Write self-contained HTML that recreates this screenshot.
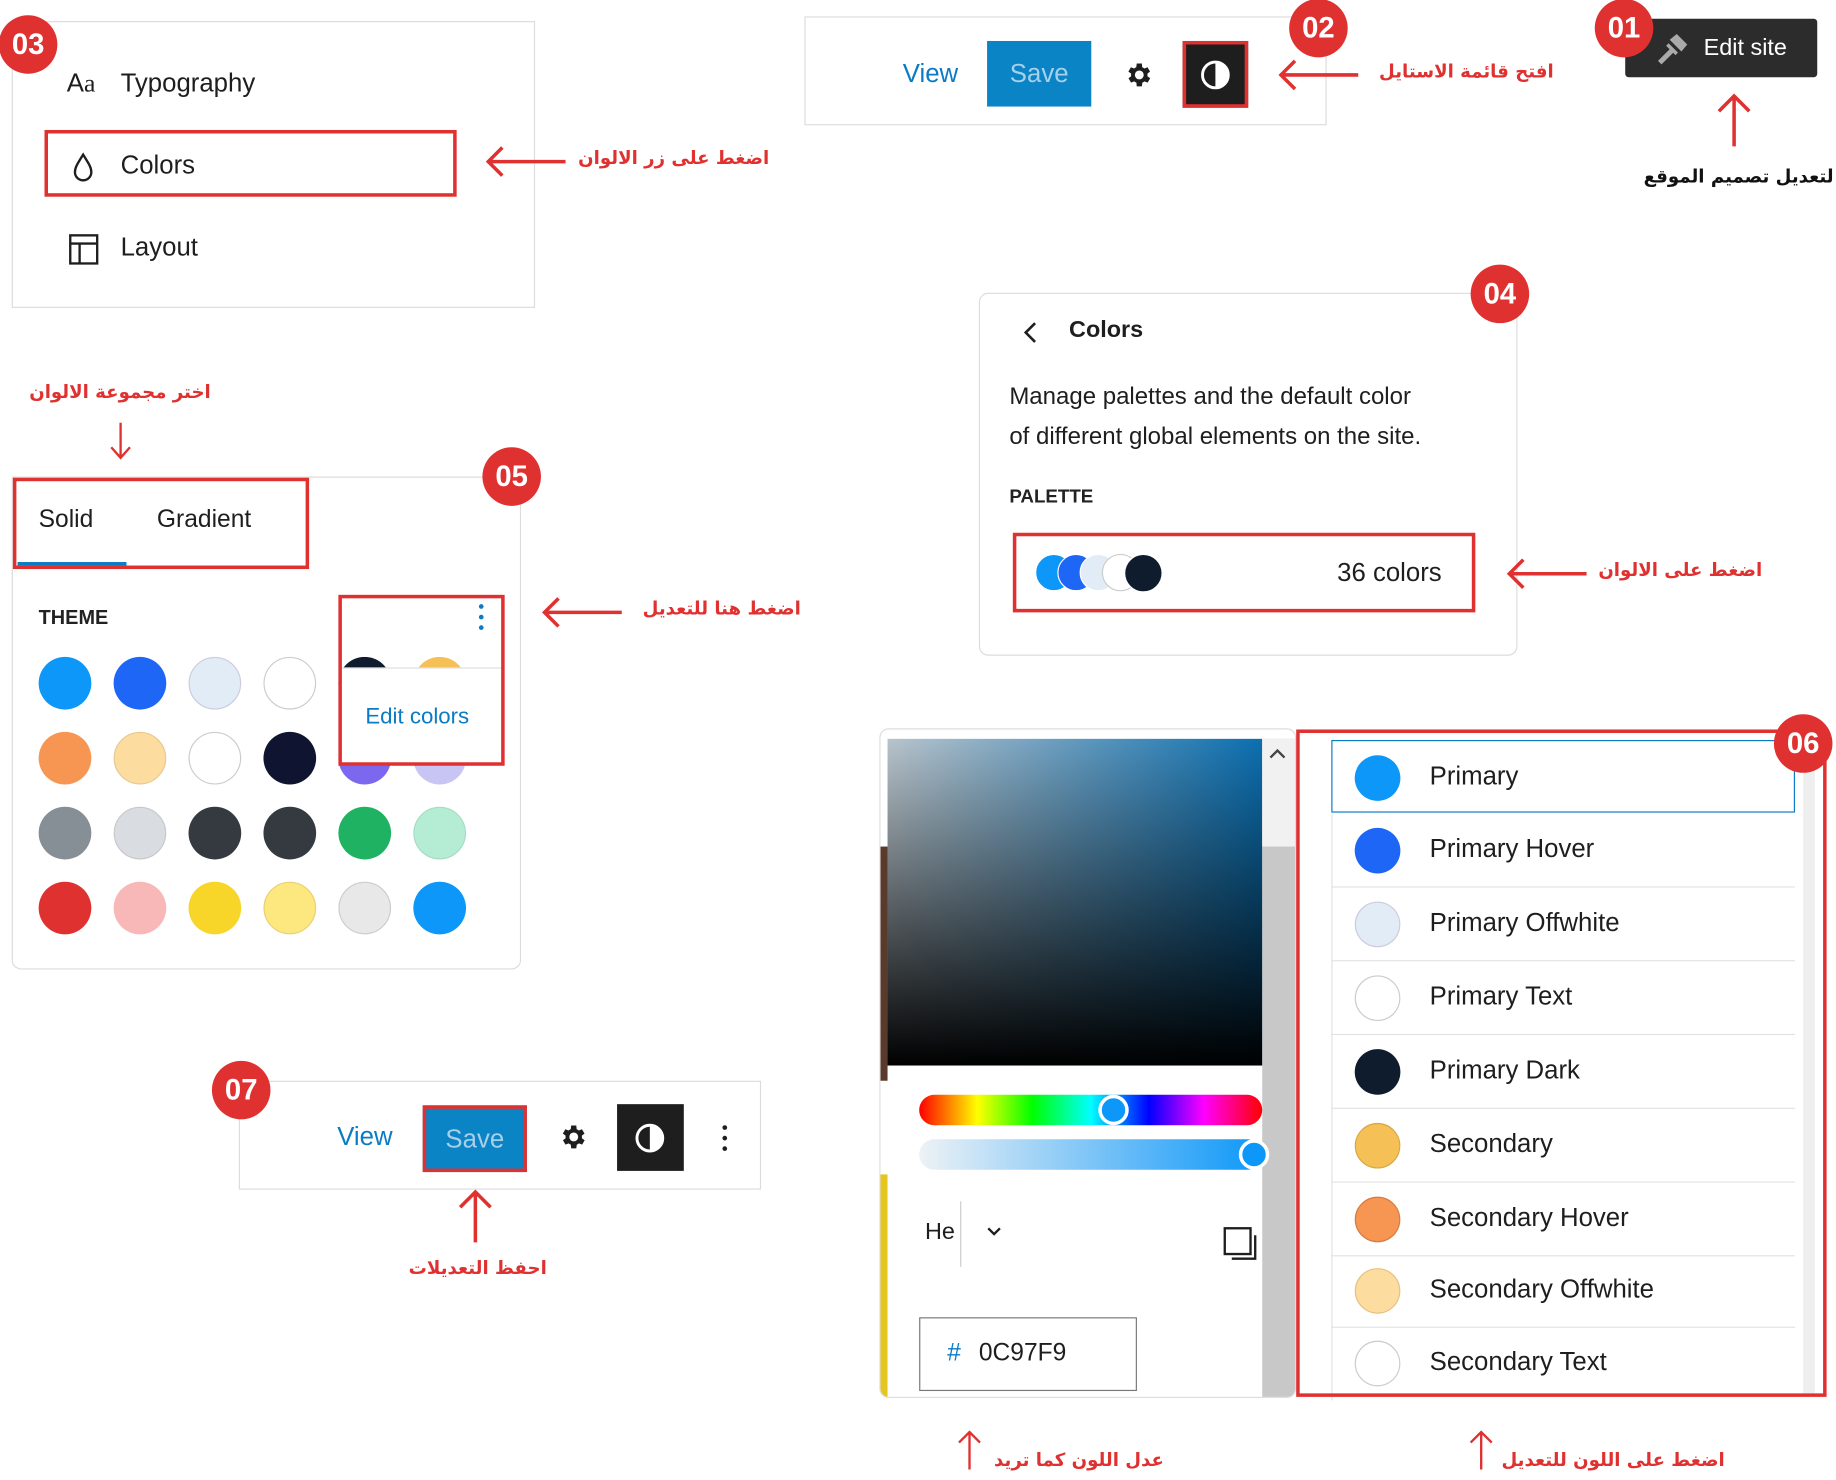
<!DOCTYPE html>
<html><head><meta charset="utf-8"><style>
*{margin:0;padding:0;box-sizing:border-box}
body{width:1836px;height:1480px;background:#fff;overflow:hidden;font-family:"Liberation Sans",sans-serif;color:#1e1e1e}
#w{position:absolute;left:0;top:0;width:1568px;height:1264px;transform:scale(1.1709);transform-origin:0 0}
.a{position:absolute}
.badge{position:absolute;width:50px;height:50px;border-radius:50%;background:#e03131;color:#fff;font:bold 25px "Liberation Sans",sans-serif;display:flex;align-items:center;justify-content:center;transform:translate(-25px,-25px)}
.ar{position:absolute;font:bold 15.5px "DejaVu Sans",sans-serif;color:#e03131;direction:rtl;white-space:nowrap;text-align:right;width:300px}
.box{position:absolute;border:1px solid #dcdcde;background:#fff}
.red{position:absolute;border:3px solid #e03131}
.t22{font-size:22px}
.sw{position:absolute;width:45px;height:45px;border-radius:50%;transform:translate(-22px,-22px)}
.row{position:absolute;left:1137px;width:396px;height:63px;border-bottom:1px solid #e2e2e2;border-left:1px solid #e2e2e2}
.row .c{position:absolute;left:19px;top:12px;width:39px;height:39px;border-radius:50%}
.row span{position:absolute;left:83px;top:17px;font-size:22px}
</style></head><body><div id="w">

<!-- 03 -->
<div class="box" style="left:10px;top:18px;width:447px;height:245px"></div>
<div class="a t22" style="left:57px;top:58px">A<span style="font-family:'Liberation Serif';">a</span></div>
<div class="a t22" style="left:103px;top:58px">Typography</div>
<div class="red" style="left:38px;top:111px;width:352px;height:57px"></div>
<svg class="a" style="left:60px;top:129px" width="22" height="28" viewBox="0 0 22 28"><path d="M11 3 C6 11 4 14 4 18 a7 7 0 0 0 14 0 c0-4-2-7-7-15z" fill="none" stroke="#1e1e1e" stroke-width="2"/></svg>
<div class="a t22" style="left:103px;top:128px">Colors</div>
<svg class="a" style="left:58px;top:199px" width="28" height="28" viewBox="0 0 28 28"><rect x="2" y="2" width="23" height="24" fill="none" stroke="#1e1e1e" stroke-width="2"/><path d="M2 9h23M10 9v17" stroke="#1e1e1e" stroke-width="2"/></svg>
<div class="a t22" style="left:103px;top:198px">Layout</div>
<div class="badge" style="left:24px;top:38px">03</div>
<svg class="a" style="left:413px;top:122px" width="72" height="32"><path d="M70 16H4M16 4 4 16l12 12" stroke="#e03131" stroke-width="3" fill="none"/></svg>
<div class="ar" style="left:357px;top:126px">اضغط على زر الالوان</div>

<!-- 02 -->
<div class="box" style="left:687px;top:14px;width:446px;height:93px"></div>
<div class="a t22" style="left:771px;top:50px;color:#0a7bc4">View</div>
<div class="a" style="left:843px;top:35px;width:89px;height:56px;background:#0b84c6;color:#a6d0ea;font-size:22px;text-align:center;line-height:56px">Save</div>
<svg class="a" style="left:960px;top:51px" width="26" height="26" viewBox="0 0 24 24"><path fill="#1e1e1e" d="M19.4 13a7.5 7.5 0 0 0 0-2l2.1-1.6-2-3.5-2.5 1a7 7 0 0 0-1.700-1L15 3h-4l-.4 2.9a7 7 0 0 0-1.7 1l-2.5-1-2 3.5L6.6 11a7.5 7.5 0 0 0 0 2l-2.1 1.6 2 3.5 2.5-1a7 7 0 0 0 1.7 1L11 21h4l.4-2.9a7 7 0 0 0 1.7-1l2.5 1 2-3.5zM13 15.5a3.5 3.5 0 1 1 0-7 3.5 3.5 0 0 1 0 7z" transform="translate(-1 0)"/></svg>
<div class="a" style="left:1010px;top:35px;width:56px;height:57px;background:#1e1e1e;border:3px solid #e03131"></div>
<svg class="a" style="left:1024px;top:50px" width="28" height="28"><circle cx="14" cy="14" r="11" fill="none" stroke="#fff" stroke-width="2.5"/><path d="M14 3a11 11 0 0 1 0 22z" fill="#fff"/></svg>
<div class="badge" style="left:1126px;top:24px">02</div>
<svg class="a" style="left:1090px;top:48px" width="72" height="32"><path d="M70 16H4M16 4 4 16l12 12" stroke="#e03131" stroke-width="3" fill="none"/></svg>
<div class="ar" style="left:1027px;top:52px">افتح قائمة الاستايل</div>

<!-- 01 -->
<div class="a" style="left:1388px;top:16px;width:164px;height:50px;background:#2c2c2c;border-radius:3px"></div>
<svg class="a" style="left:1412px;top:26px" width="32" height="30" viewBox="0 0 32 30"><path d="M4 26 16 14l3 3L7 29zM14 8l6-5 9 9-5 6z" fill="#aaa"/><path d="M12 12l8 8" stroke="#aaa" stroke-width="3"/></svg>
<div class="a" style="left:1455px;top:30px;color:#fff;font-size:20px">Edit site</div>
<div class="badge" style="left:1387px;top:24px">01</div>
<svg class="a" style="left:1464px;top:78px" width="34" height="48"><path d="M17 47V4M4 17 17 4l13 13" stroke="#e03131" stroke-width="3" fill="none"/></svg>
<div class="ar" style="left:1266px;top:142px;color:#111">لتعديل تصميم الموقع</div>

<!-- 04 -->
<div class="box" style="left:836px;top:250px;width:460px;height:310px;border-radius:8px"></div>
<svg class="a" style="left:872px;top:273px" width="16" height="22"><path d="M12 3 4 11l8 8" stroke="#1e1e1e" stroke-width="2.2" fill="none"/></svg>
<div class="a" style="left:913px;top:271px;font-size:20px;font-weight:bold">Colors</div>
<div class="a" style="left:862px;top:322px;font-size:20.5px;line-height:34px;width:430px">Manage palettes and the default color<br>of different global elements on the site.</div>
<div class="a" style="left:862px;top:416px;font-size:16px;font-weight:bold;color:#222">PALETTE</div>
<div class="red" style="left:865px;top:455px;width:395px;height:68px"></div>
<div class="a" style="left:884px;top:473px;width:32px;height:32px;border-radius:50%;background:#0c97f9;border:1px solid #fff"></div>
<div class="a" style="left:903px;top:473px;width:32px;height:32px;border-radius:50%;background:#1e66f5;border:1px solid #fff"></div>
<div class="a" style="left:922px;top:473px;width:32px;height:32px;border-radius:50%;background:#e1ecf7;border:1px solid #fff"></div>
<div class="a" style="left:941px;top:473px;width:32px;height:32px;border-radius:50%;background:#fff;border:1px solid #ccc"></div>
<div class="a" style="left:960px;top:473px;width:33px;height:33px;border-radius:50%;background:#0f1c2e;border:1px solid #fff"></div>
<div class="a" style="left:1142px;top:476px;font-size:22px">36 colors</div>
<div class="badge" style="left:1281px;top:251px">04</div>
<svg class="a" style="left:1285px;top:474px" width="72" height="32"><path d="M70 16H4M16 4 4 16l12 12" stroke="#e03131" stroke-width="3" fill="none"/></svg>
<div class="ar" style="left:1205px;top:478px">اضغط على الالوان</div>

<!-- 05 -->
<div class="ar" style="left:-120px;top:326px">اختر مجموعة الالوان</div>
<svg class="a" style="left:92px;top:360px" width="22" height="34"><path d="M11 1v30M3 22l8 9 8-9" stroke="#e03131" stroke-width="2" fill="none"/></svg>
<div class="box" style="left:10px;top:407px;width:435px;height:421px;border-radius:0 0 8px 8px"></div>
<div class="a" style="left:15px;top:480px;width:93px;height:3px;background:#0a7bc4"></div>
<div class="red" style="left:11px;top:408px;width:253px;height:78px"></div>
<div class="a" style="left:33px;top:432px;font-size:21px">Solid</div>
<div class="a" style="left:134px;top:432px;font-size:21px">Gradient</div>
<div class="badge" style="left:437px;top:407px">05</div>
<div class="a" style="left:33px;top:518px;font-size:17px;font-weight:bold;color:#222">THEME</div>

<div class="sw" style="left:55px;top:583px;background:#0c97f9"></div>
<div class="sw" style="left:119px;top:583px;background:#1e66f5"></div>
<div class="sw" style="left:183px;top:583px;background:#e1ecf7;border:1px solid #ccd"></div>
<div class="sw" style="left:247px;top:583px;background:#fff;border:1px solid #ccc"></div>
<div class="sw" style="left:311px;top:583px;background:#0f1c2e"></div>
<div class="sw" style="left:375px;top:583px;background:#f5c156"></div>
<div class="sw" style="left:55px;top:647px;background:#f79552"></div>
<div class="sw" style="left:119px;top:647px;background:#fddca0;border:1px solid #e8c890"></div>
<div class="sw" style="left:183px;top:647px;background:#fff;border:1px solid #ccc"></div>
<div class="sw" style="left:247px;top:647px;background:#0f1430"></div>
<div class="sw" style="left:311px;top:647px;background:#7b68ee"></div>
<div class="sw" style="left:375px;top:647px;background:#c8c5f5"></div>
<div class="sw" style="left:55px;top:711px;background:#868e96"></div>
<div class="sw" style="left:119px;top:711px;background:#d9dce0;border:1px solid #c8c8c8"></div>
<div class="sw" style="left:183px;top:711px;background:#343a40"></div>
<div class="sw" style="left:247px;top:711px;background:#343a40"></div>
<div class="sw" style="left:311px;top:711px;background:#20b263"></div>
<div class="sw" style="left:375px;top:711px;background:#b5ecd4;border:1px solid #a6dcc4"></div>
<div class="sw" style="left:55px;top:775px;background:#e03131"></div>
<div class="sw" style="left:119px;top:775px;background:#f8b8b8"></div>
<div class="sw" style="left:183px;top:775px;background:#f8d629"></div>
<div class="sw" style="left:247px;top:775px;background:#fde880;border:1px solid #e8d070"></div>
<div class="sw" style="left:311px;top:775px;background:#e8e8e8;border:1px solid #ccc"></div>
<div class="sw" style="left:375px;top:775px;background:#0c97f9"></div>
<div class="a" style="left:290px;top:509px;width:140px;height:52px;background:#fff"></div>
<div class="a" style="left:291px;top:570px;width:138px;height:82px;background:#fff;border-top:1px solid #ddd"></div>
<div class="a" style="left:312px;top:602px;font-size:19px;color:#0a7bc4">Edit colors</div>
<div class="a" style="left:409px;top:516px;width:4px;height:4px;border-radius:50%;background:#0a7bc4;box-shadow:0 9px 0 #0a7bc4,0 18px 0 #0a7bc4"></div>
<div class="red" style="left:289px;top:508px;width:142px;height:146px"></div>
<svg class="a" style="left:461px;top:507px" width="72" height="32"><path d="M70 16H4M16 4 4 16l12 12" stroke="#e03131" stroke-width="3" fill="none"/></svg>
<div class="ar" style="left:384px;top:511px">اضغط هنا للتعديل</div>

<!-- 07 -->
<div class="box" style="left:204px;top:923px;width:446px;height:93px"></div>
<div class="a t22" style="left:288px;top:958px;color:#0a7bc4">View</div>
<div class="a" style="left:361px;top:944px;width:89px;height:57px;background:#0b84c6;color:#a6d0ea;font-size:22px;text-align:center;line-height:51px;border:3px solid #e03131">Save</div>
<svg class="a" style="left:477px;top:958px" width="26" height="26" viewBox="0 0 24 24"><path fill="#1e1e1e" d="M19.4 13a7.5 7.5 0 0 0 0-2l2.1-1.6-2-3.5-2.5 1a7 7 0 0 0-1.7-1L15 3h-4l-.4 2.9a7 7 0 0 0-1.7 1l-2.5-1-2 3.5L6.6 11a7.5 7.5 0 0 0 0 2l-2.1 1.6 2 3.5 2.5-1a7 7 0 0 0 1.7 1L11 21h4l.4-2.9a7 7 0 0 0 1.7-1l2.5 1 2-3.5zM13 15.5a3.5 3.5 0 1 1 0-7 3.5 3.5 0 0 1 0 7z" transform="translate(-1 0)"/></svg>
<div class="a" style="left:527px;top:943px;width:57px;height:57px;background:#1e1e1e"></div>
<svg class="a" style="left:541px;top:958px" width="28" height="28"><circle cx="14" cy="14" r="11" fill="none" stroke="#fff" stroke-width="2.5"/><path d="M14 3a11 11 0 0 1 0 22z" fill="#fff"/></svg>
<div class="a" style="left:617px;top:961px;width:4px;height:4px;border-radius:50%;background:#1e1e1e;box-shadow:0 9px 0 #1e1e1e,0 18px 0 #1e1e1e"></div>
<div class="badge" style="left:206px;top:931px">07</div>
<svg class="a" style="left:389px;top:1014px" width="34" height="48"><path d="M17 47V4M4 17 17 4l13 13" stroke="#e03131" stroke-width="3" fill="none"/></svg>
<div class="ar" style="left:167px;top:1074px">احفظ التعديلات</div>

<!-- picker -->
<div class="a" style="left:751px;top:622px;width:356px;height:572px;border:1px solid #ddd;border-radius:8px;background:#fff;overflow:hidden">
 <div class="a" style="left:0;top:100px;width:6px;height:200px;background:#5a3a2a"></div>
 <div class="a" style="left:0;top:380px;width:6px;height:190px;background:#e6c51e"></div>
 <div class="a" style="left:6px;top:8px;width:320px;height:279px;background:linear-gradient(to bottom,rgba(0,0,0,0),#000),linear-gradient(to right,#b8c4cc,#0c6fb0)"></div>
 <div class="a" style="left:326px;top:8px;width:28px;height:564px;background:#c8c8c8"></div>
 <div class="a" style="left:326px;top:8px;width:28px;height:92px;background:#f1f1f1"></div>
 <svg class="a" style="left:331px;top:14px" width="16" height="14"><path d="M2 10 8 4l6 6" stroke="#444" stroke-width="2" fill="none"/></svg>
 <div class="a" style="left:33px;top:312px;width:293px;height:26px;border-radius:13px;background:linear-gradient(to right,#f00,#ff0 17%,#0f0 33%,#0ff 50%,#00f 67%,#f0f 83%,#f00)"></div>
 <div class="a" style="left:186px;top:312px;width:26px;height:26px;border-radius:50%;border:3px solid #fff;background:#0c97f9"></div>
 <div class="a" style="left:33px;top:350px;width:293px;height:26px;border-radius:13px;background:linear-gradient(to right,#eef2f5,#0c97f9)"></div>
 <div class="a" style="left:306px;top:350px;width:26px;height:26px;border-radius:50%;border:3px solid #fff;background:#0c97f9"></div>
 <div class="a" style="left:38px;top:418px;font-size:20px">He</div>
 <div class="a" style="left:68px;top:403px;width:1px;height:56px;background:#ccc"></div>
 <svg class="a" style="left:90px;top:424px" width="14" height="10"><path d="M2 2l5 5 5-5" stroke="#1e1e1e" stroke-width="2" fill="none"/></svg>
 <svg class="a" style="left:292px;top:424px" width="34" height="34"><rect x="2" y="2" width="22" height="22" fill="none" stroke="#1e1e1e" stroke-width="2"/><path d="M28 8v20H8" stroke="#1e1e1e" stroke-width="2" fill="none"/></svg>
 <div class="a" style="left:33px;top:502px;width:186px;height:63px;border:1px solid #777"></div>
 <div class="a" style="left:57px;top:521px;font-size:21px;color:#0a7bc4">#</div>
 <div class="a" style="left:84px;top:521px;font-size:21px">0C97F9</div>
</div>

<!-- list -->
<div class="a" style="left:1540px;top:630px;width:10px;height:560px;background:#eee"></div>
<div class="row" style="top:632px;border:1px solid #0a7bc4;height:62px"><div class="c" style="background:#0c97f9"></div><span>Primary</span></div>
<div class="row" style="top:695px"><div class="c" style="background:#1e66f5"></div><span>Primary Hover</span></div>
<div class="row" style="top:758px"><div class="c" style="background:#e1ecf7;border:1px solid #ccd"></div><span>Primary Offwhite</span></div>
<div class="row" style="top:821px"><div class="c" style="background:#fff;border:1px solid #ccc"></div><span>Primary Text</span></div>
<div class="row" style="top:884px"><div class="c" style="background:#0f1c2e"></div><span>Primary Dark</span></div>
<div class="row" style="top:947px"><div class="c" style="background:#f5c156;border:1px solid #d8a840"></div><span>Secondary</span></div>
<div class="row" style="top:1010px"><div class="c" style="background:#f79552;border:1px solid #d87a40"></div><span>Secondary Hover</span></div>
<div class="row" style="top:1071px"><div class="c" style="background:#fddca0;border:1px solid #e8c080"></div><span>Secondary Offwhite</span></div>
<div class="row" style="top:1133px;border-bottom:none"><div class="c" style="background:#fff;border:1px solid #ccc"></div><span>Secondary Text</span></div>
<div class="red" style="left:1107px;top:623px;width:453px;height:570px"></div>
<div class="badge" style="left:1540px;top:635px">06</div>

<svg class="a" style="left:816px;top:1220px" width="24" height="36"><path d="M12 35V3M3 12l9-9 9 9" stroke="#e03131" stroke-width="2" fill="none"/></svg>
<div class="ar" style="left:694px;top:1238px">عدل اللون كما تريد</div>
<svg class="a" style="left:1253px;top:1220px" width="24" height="36"><path d="M12 35V3M3 12l9-9 9 9" stroke="#e03131" stroke-width="2" fill="none"/></svg>
<div class="ar" style="left:1173px;top:1238px">اضغط على اللون للتعديل</div>

</div></body></html>
